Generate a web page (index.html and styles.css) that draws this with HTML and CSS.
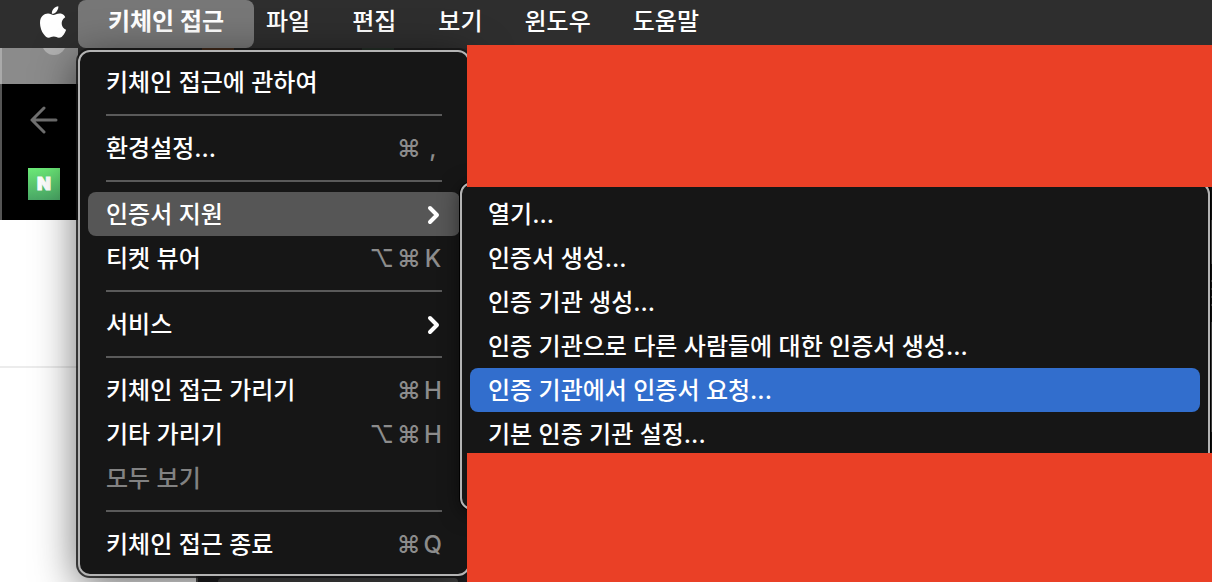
FILE: index.html
```html
<!DOCTYPE html>
<html lang="ko">
<head>
    <meta charset="UTF-8">
    <meta name="viewport" content="width=device-width, initial-scale=1.0">
    <title>키체인 접근</title>
    <link rel="stylesheet" href="styles.css">
</head>
<body>
    <nav class="menubar">
        <button class="apple" aria-label="Apple">
            <svg width="28" height="32" viewBox="0 0 28 32">
                <path d="M19.3 0.3c.3 2-.6 3.900-1.700 5.200-1.200 1.400-3 2.400-4.700 2.300-.3-1.900.6-3.900 1.700-5.100C15.800 1.300 17.700.4 19.300.3z"/>
                <path d="M26.300 11.200c-.2.1-3.600 2-3.600 6.100 0 4.800 4.300 6.400 4.400 6.500 0 .1-.7 2.400-2.300 4.700-1.400 2-2.800 3.300-4.900 3.300-2.100 0-2.700-1.200-5.100-1.200-2.400 0-3.200 1.200-5.200 1.200s-3.400-1.500-5-3.700C2.700 25.400 1 21 1 16.900c0-6.600 4.300-9.300 8-9.300 2.300 0 4.200 1.400 5.500 1.400s3.500-1.500 6.200-1.500c1 0 3.900.1 5.600 3.700z"/>
            </svg>
        </button>
        <button class="app-name">키체인 접근</button>
        <div class="menus">
            <button>파일</button>
            <button>편집</button>
            <button>보기</button>
            <button>윈도우</button>
            <button>도움말</button>
        </div>
    </nav>

    <main class="desktop">
        <!-- Browser window behind the menu -->
        <div class="browser">
            <div class="tabs">
                <span class="window-dot"></span>
                <span class="tab-strip"><i class="tab-orange"></i><i class="tab-green"></i></span>
            </div>
            <div class="toolbar">
                <button class="back" aria-label="뒤로">
                    <svg width="28" height="28" viewBox="0 0 28 28">
                        <path d="M26 14H2M14 2L2 14l12 12"/>
                    </svg>
                </button>
                <a class="bookmark" href="#" aria-label="네이버">N</a>
            </div>
            <div class="page"></div>
        </div>
        <div class="back-window"><div class="back-panel"></div></div>
        <div class="edge-window">
            <i class="edge-block"></i>
            <i class="edge-lines"></i>
            <i class="edge-block edge-long"></i>
        </div>

        <!-- App menu -->
        <div class="menu app-menu">
            <button class="item">키체인 접근에 관하여</button>
            <hr>
            <button class="item">환경설정...<kbd><span>⌘</span><span>,</span></kbd></button>
            <hr>
            <button class="item open">인증서 지원
                <svg class="chevron" width="14" height="20" viewBox="0 0 14 20"><path d="M4 3l7 7-7 7"/></svg>
            </button>
            <button class="item">티켓 뷰어<kbd><span>⌥</span><span>⌘</span><span>K</span></kbd></button>
            <hr>
            <button class="item">서비스
                <svg class="chevron" width="14" height="20" viewBox="0 0 14 20"><path d="M4 3l7 7-7 7"/></svg>
            </button>
            <hr>
            <button class="item">키체인 접근 가리기<kbd><span>⌘</span><span>H</span></kbd></button>
            <button class="item">기타 가리기<kbd><span>⌥</span><span>⌘</span><span>H</span></kbd></button>
            <button class="item" disabled>모두 보기</button>
            <hr>
            <button class="item">키체인 접근 종료<kbd><span>⌘</span><span>Q</span></kbd></button>
        </div>

        <!-- Submenu -->
        <div class="menu sub-menu">
            <button class="item">열기...</button>
            <button class="item">인증서 생성...</button>
            <button class="item">인증 기관 생성...</button>
            <button class="item">인증 기관으로 다른 사람들에 대한 인증서 생성...</button>
            <button class="item selected">인증 기관에서 인증서 요청...</button>
            <button class="item">기본 인증 기관 설정...</button>
        </div>

        <div class="cover cover-top"></div>
        <div class="cover cover-bottom"></div>
    </main>
</body>
</html>
```

FILE: styles.css
```css
* {
    box-sizing: border-box;
}
body {
    margin: 0;
    min-height: 100vh;
    display: flex;
    flex-direction: column;
    overflow: hidden;
    background: #fff;
    font-family: Inter, "Noto Sans CJK KR", sans-serif;
    font-size: 24px;
    font-weight: 500;
    color: #fff;
}
button {
    margin: 0;
    padding: 0;
    border: none;
    background: none;
    color: inherit;
    font: inherit;
    white-space: nowrap;
}

/* Menu bar */
.menubar {
    display: flex;
    height: 48px;
    background: #2e2e2e;
    line-height: 44px;
}
.menubar button {
    padding-bottom: 4px;
}
.menubar .apple {
    width: 78px;
    padding: 0 0 4px 39px;
    line-height: 0;
    text-align: left;
}
.apple svg {
    fill: #fff;
}
.menubar .app-name {
    width: 176px;
    border-radius: 8px;
    background: #777;
    font-weight: 700;
}
.menus {
    display: flex;
    gap: 42px;
    padding-left: 12px;
}

/* Windows in the background */
.desktop {
    position: relative;
    flex: 1;
    display: flex;
}
.browser {
    flex: 1;
    display: flex;
    flex-direction: column;
}
.tabs {
    display: flex;
    height: 36px;
    border-left: 2px solid #aaa;
    background: #8b8b8b;
    overflow: hidden;
}
.window-dot {
    width: 24px;
    height: 24px;
    margin: -17px 12px 0 40px;
    border-radius: 50%;
    background: #b0b0b0;
}
.tab-strip {
    flex: 1;
    display: flex;
    gap: 128px;
    padding-left: 124px;
    background: #2a2a2a;
}
.tab-orange, .tab-green {
    width: 32px;
    background: #d0641a;
}
.tab-green {
    background: #4c7a58;
}
.toolbar {
    display: flex;
    flex-direction: column;
    align-items: flex-start;
    gap: 34px;
    height: 136px;
    padding: 22px 0 0 26px;
    border-left: 2px solid #555;
    background: #000;
}
.back {
    height: 28px;
    margin-left: 2px;
    line-height: 0;
}
.back path {
    fill: none;
    stroke: #707070;
    stroke-width: 3;
    stroke-linecap: round;
    stroke-linejoin: round;
}
.bookmark {
    width: 32px;
    height: 32px;
    background: linear-gradient(#6cea78, #4aa866);
    color: #fff;
    font-size: 18px;
    font-weight: 900;
    line-height: 32px;
    text-align: center;
    text-decoration: none;
    -webkit-text-stroke: 1px #fff;
}
.page {
    height: 148px;
    border-bottom: 2px solid #ececec;
}
.back-window {
    position: absolute;
    top: 450px;
    bottom: 0;
    left: 196px;
    right: 0;
    padding: 80px 0 0 20px;
    border-left: 2px solid #555;
    background: #202022;
}
.back-panel {
    width: 240px;
    height: 100%;
    border-radius: 8px 8px 0 0;
    background: #484848;
}
.edge-window {
    position: absolute;
    top: 139px;
    right: 0;
    width: 2px;
    height: 267px;
    padding-top: 33px;
    display: flex;
    flex-direction: column;
    background: #141414;
}
.edge-block {
    height: 44px;
    background: #4a4a4a;
}
.edge-lines {
    height: 26px;
    margin: 16px 0;
    background: repeating-linear-gradient(#4a4a4a 0 2px, #141414 2px 8px);
}
.edge-long {
    height: 110px;
}

/* Menus */
.menu {
    position: absolute;
    padding: 8px;
    border: 2px solid #b4b4b4;
    border-radius: 12px;
    background: #161616;
    box-shadow: 0 0 0 2px rgba(20, 20, 20, 0.8), 0 10px 44px rgba(0, 0, 0, 0.6);
}
.app-menu {
    top: 2px;
    left: 78px;
    width: 392px;
}
.sub-menu {
    top: 134px;
    left: 460px;
    right: 2px;
    padding-bottom: 52px;
    box-shadow: 0 0 0 1px #000, 0 4px 20px rgba(0, 0, 0, 0.5);
}
.item {
    display: flex;
    align-items: center;
    justify-content: space-between;
    width: 100%;
    height: 44px;
    padding: 2px 18px 0;
    border-radius: 8px;
    line-height: 42px;
    text-align: left;
}
.item:disabled {
    color: #828282;
}
.open {
    background: #565656;
}
.selected {
    background: #326ecd;
}
.menu hr {
    height: 2px;
    margin: 10px 18px;
    border: none;
    background: #5a5a5a;
}
.chevron {
    margin-right: 2px;
}
.chevron path {
    fill: none;
    stroke: #fff;
    stroke-width: 4;
    stroke-linecap: round;
    stroke-linejoin: round;
}
kbd {
    display: flex;
    gap: 3px;
    color: #8c8c8c;
    font-family: Inter, "DejaVu Sans", sans-serif;
    font-weight: 500;
}
kbd span {
    min-width: 24px;
    text-align: center;
}
kbd span:last-child {
    min-width: 18px;
}

.cover {
    position: absolute;
    left: 467px;
    right: 0;
    background: #ea4026;
}
.cover-top {
    top: -3px;
    height: 142px;
}
.cover-bottom {
    top: 405px;
    bottom: 0;
}
```
